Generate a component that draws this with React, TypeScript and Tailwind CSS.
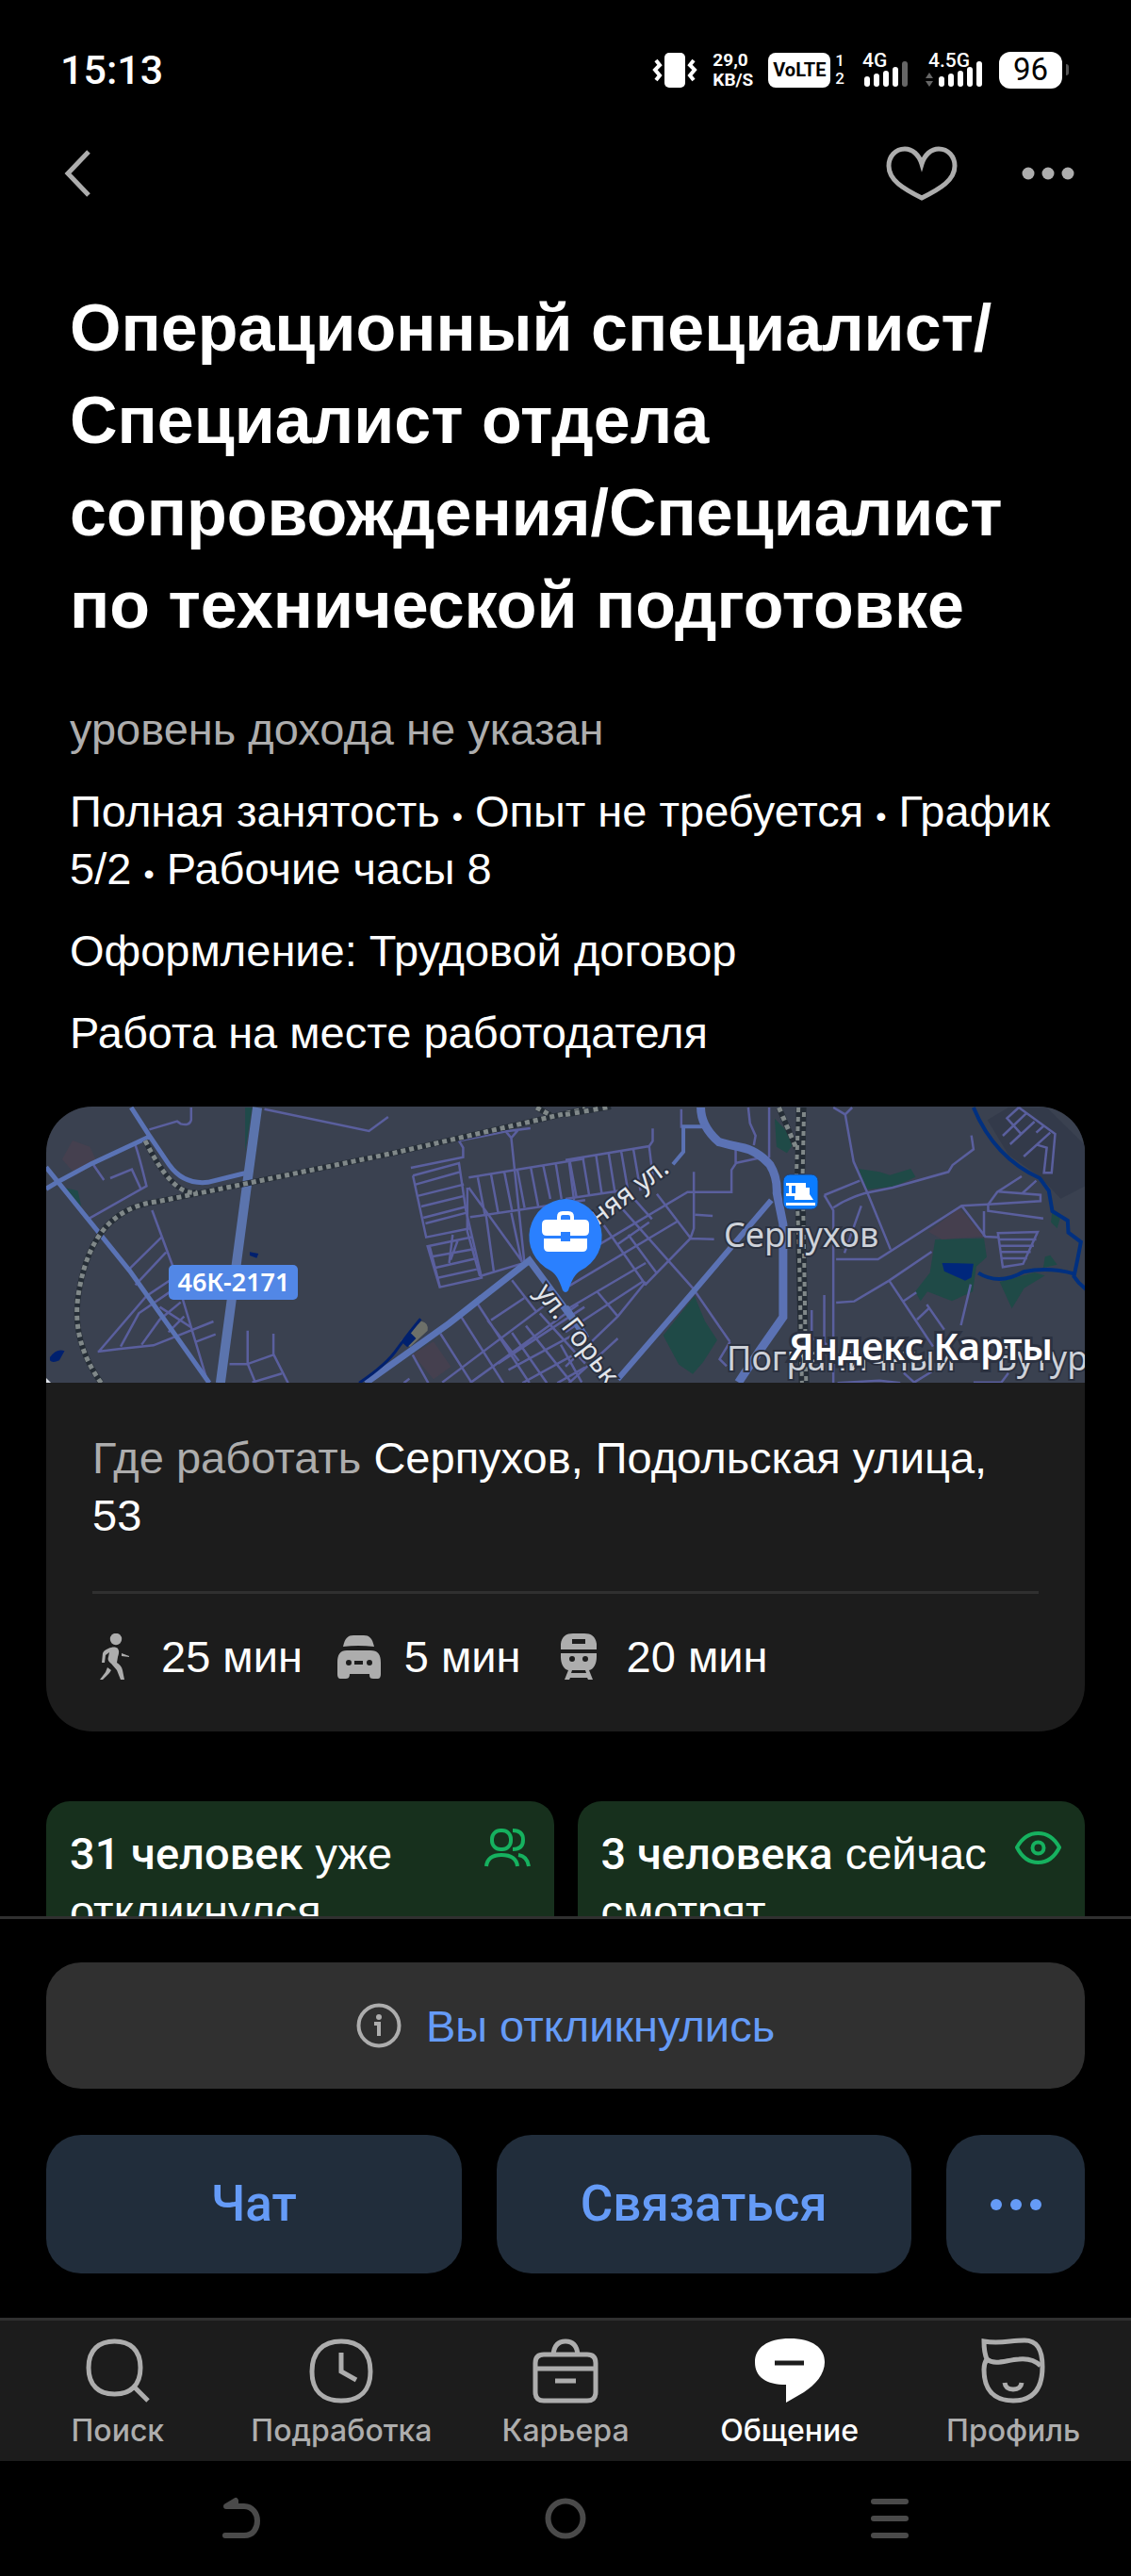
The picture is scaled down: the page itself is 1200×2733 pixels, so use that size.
import React from "react";
import clsx from "clsx";

const ICON_GRAY = "#adadad";

function SignalBars({ label, dimLast, arrows }: { label: string; dimLast?: boolean; arrows?: boolean }) {
  const start = arrows ? 16 : 5;
  const tops = [27, 24, 21, 17, 11];
  return (
    <svg width={arrows ? 64 : 52} height="52" viewBox={arrows ? "0 -6 64 52" : "0 -6 52 52"}>
      {tops.map((top, i) => (
        <rect
          key={top}
          x={start + i * 10}
          y={top}
          width="6"
          height={38 - top}
          rx="3"
          fill={dimLast && i === 4 ? "#666" : "#fff"}
        />
      ))}
      {arrows && <path d="M2 29l4-6 4 6zM2 32l4 6 4-6z" fill="#666" />}
      <text x={arrows ? 5 : 3} y="17" fontSize="21" className="fill-white font-[Roboto,sans-serif] font-medium">
        {label}
      </text>
    </svg>
  );
}

function StatusBar() {
  return (
    <div className="flex h-[148px] shrink-0 items-center justify-between pr-[66px] pl-[64px] font-[Roboto,sans-serif] text-white">
      <span className="text-[43px] leading-[48px] font-medium">15:13</span>
      <div className="flex items-center gap-4">
        <svg width="48" height="40" viewBox="0 0 48 40">
          <rect x="13" y="2" width="22" height="37" rx="5" fill="#fff" />
          <path
            d="M4 10l4 5-5 5 5 6-4 5M44 10l-4 5 5 5-5 6 4 5"
            fill="none"
            stroke="#fff"
            strokeWidth="4"
          />
        </svg>
        <div className="flex flex-col text-[19px] leading-[21px] font-bold">
          <span>29,0</span>
          <span>KB/S</span>
        </div>
        <div className="flex items-center gap-[5px]">
          <span className="flex h-[37px] w-[66px] items-center justify-center rounded-lg bg-white text-[20px] leading-[24px] font-bold text-black">
            VoLTE
          </span>
          <div className="flex flex-col text-[17px] leading-[19px] font-medium">
            <span>1</span>
            <span>2</span>
          </div>
        </div>
        <SignalBars label="4G" dimLast />
        <SignalBars label="4.5G" arrows />
        <div className="flex items-center gap-[4px]">
          <span className="flex h-[39px] w-[67px] items-center justify-center rounded-xl bg-white text-[33px] leading-[36px] text-black">
            96
          </span>
          <span className="h-3 w-[3px] rounded-r bg-[#555]" />
        </div>
      </div>
    </div>
  );
}

function TopBar() {
  return (
    <div className="flex h-[72px] shrink-0 items-center justify-between pr-[58px] pl-[65px]">
      <button type="button" aria-label="Назад">
        <svg width="34" height="52" viewBox="0 0 34 52" fill="none" stroke={ICON_GRAY} strokeWidth="5">
          <path d="M29 3L7 26l22 23" />
        </svg>
      </button>
      <div className="flex items-center gap-[65px]">
        <button type="button" aria-label="В избранное">
          <svg width="78" height="60" viewBox="0 0 78 60" fill="none" stroke={ICON_GRAY} strokeWidth="5">
            <path d="M39 20C36 10 29 4 21 4 11 4 4 12 4 22c0 15 15 24 35 34 20-10 35-19 35-34C74 12 67 4 57 4c-8 0-15 6-18 16z" />
          </svg>
        </button>
        <button type="button" aria-label="Ещё">
          <svg width="60" height="20" viewBox="0 0 60 20" fill={ICON_GRAY}>
            <circle cx="9" cy="10" r="6.5" />
            <circle cx="30" cy="10" r="6.5" />
            <circle cx="51" cy="10" r="6.5" />
          </svg>
        </button>
      </div>
    </div>
  );
}

function StreetMap() {
  return (
    <svg
      className="block h-[293px] w-full"
      viewBox="0 0 1102 293"
      preserveAspectRatio="xMidYMid slice"
      role="img"
      aria-label="Карта"
    >
      <rect width="1102" height="293" fill="#3a4150" />

      {/* west half */}
      <g transform="translate(-9 -14) scale(.37 .3333)" fill="none">
        <path d="M100 150l50 20 20 50-60 40-40-50z" fill="#45404f" />
        <path d="M1075 830l60-40 50 80-50 40z" fill="#45404f" />
        <path d="M595 45h20l-20 140zM75 300l50 60-10-50z" fill="#1f4a4a" />
        <path d="M35 840q20-30 42-20l-15 30q-20 10-27 0zM608 505l25 5-5 14-20-8z" fill="#00206e" />
        <path d="M1040 790l60-65q22 5 18 30l-50 52z" fill="#6d7069" />
        <path d="M1042 790l25-30 18 20-25 28z" fill="#00206e" />
        <g stroke="#5a5f9e" strokeWidth="2.5">
          <path vectorEffect="non-scaling-stroke" d="M440 45v40q-5 20-30 12l-10-8-80 26M650 50l300 70 55-45M160 228l30 48M208 270l62-28 25 60M280 165q10 30 32 130L148 398M328 372l60 180 100 370M355 458L262 560M368 506L280 610M400 580L312 645 175 822M395 620L290 700 238 806M410 665L350 720 298 800M420 710L375 760M172 822l60-8 100-12 172-76M440 745L350 680M455 790l55-23M602 755v105l22 60M676 765v65l42 92M550 862h50l76-30M615 920l85-28M1050 922l16-14" />
          <path vectorEffect="non-scaling-stroke" d="M1070 237l150-34v-30l-12-22 135-30 70-10M1340 118l18 24 20-26M1358 142l38 400M1076 262l132-40 20 150 45 215-120 30-35-130 130-30M1076 262l38 196 125-28M1084 290l128-40M1092 326l130-36M1100 360l125-34M1106 396l125-36M1112 414l118-34M1130 520l120-24M1138 556l118-30M1144 588l115-28M1124 488l30 130M1190 450l-10 90M1204 470l-20 60" />
          <path vectorEffect="non-scaling-stroke" d="M1236 268l332-60M1262 268l20 116M1300 258l20 120M1338 250l22 122M1376 246l20 118M1414 236l22 128M1450 232l20 104M1486 226l16 110M1524 220l14 120M1240 394l330-54M1236 300l154 236M1232 300v140l36 142M1286 390l22 178M1358 380l30 156M1268 582l120-40" />
          <path vectorEffect="non-scaling-stroke" d="M1260 668l150 254M1215 712l120 210M1155 765l90 157M1075 832l45 90M1360 595l70 100M1300 722l95-70M1160 920l300-250M1240 922l310-250M1320 860l248-180M1350 880l218-130M1390 922l180-110M1440 700l130 160M1400 740l130 180M1360 762l100 160M1290 722l90 130M1500 800l60 120M1490 922l80-50" />
        </g>
        <g stroke="#5a73b5" strokeWidth="5">
          <path vectorEffect="non-scaling-stroke" d="M24 304l30-20 100-60 166-86M268 45l50 86 60 98q40 62 110 54l110-30" />
          <path vectorEffect="non-scaling-stroke" d="M24 235l240 330 228 357" />
          <path vectorEffect="non-scaling-stroke" d="M940 922l240-190 230-200 160 240" strokeWidth="7" />
        </g>
        <path vectorEffect="non-scaling-stroke" d="M922 922q80-60 110-110 40-60 66-94" stroke="#00206e" strokeWidth="3" />
        <path vectorEffect="non-scaling-stroke" d="M630 45l-28 230-78 647" stroke="#5b74ad" strokeWidth="10" />
        <g stroke="#252d36" strokeWidth="6">
          <path vectorEffect="non-scaling-stroke" d="M182 922Q90 780 120 620q40-250 220-275l180-40 500-115 550-140" />
          <path vectorEffect="non-scaling-stroke" d="M308 150q80 180 150 165M1430 45l40 24" />
        </g>
        <g stroke="#808889" strokeWidth="5" strokeDasharray="5 4">
          <path vectorEffect="non-scaling-stroke" d="M182 922Q90 780 120 620q40-250 220-275l180-40 500-115 550-140" />
          <path vectorEffect="non-scaling-stroke" d="M308 150q80 180 150 165M1430 45l40 24" />
        </g>
      </g>

      {/* east half */}
      <g transform="translate(551 -14) scale(.37 .3333)" fill="none">
        <path d="M1270 45h110l110 120v130l-70 40-60-70-90-70-60-110z" fill="#333a4a" />
        <path d="M840 240l60 10 30 10 60-20 14 26-60 30-80 10zM1060 465l140-4 8 60-30 30-10 80-60 30-70-30-20 30-15-30 42-60zM1245 600l100-30 30 10-60 40-35 65zM280 770l90-125 30 80 35 60-40 70-30 38-40-30zM600 80l60 70-25 40-30-20zM1395 380l25 10-10 40-18-20zM1375 520l15-5 20 30-40 10z" fill="#1f4a47" />
        <path d="M1040 440l90-75 70 90-120 10z" fill="#453f4e" />
        <path d="M1080 540l90 2-6 44-18 10-60-30z" fill="#00277c" />
        <g stroke="#5a5f9e" strokeWidth="2.5">
          <path vectorEffect="non-scaling-stroke" d="M250 112v40l-10 16-240 44M240 170l12 110M195 180l20 130M160 186l20 130M124 192l18 125M88 200l16 120M50 206l18 120M12 214l20 120M0 336l180-30M332 50v60M524 45l5 50 16 40-5 30M584 45v160M488 180v44l-12 20v70H350L0 545M487 222l66-16M368 250v180l-10 32-130 148M358 462l68 2M372 386l50 4M262 320l96 140M110 420l120 190M165 370l200 250 106 170M200 340l48 60M0 620l320-212M0 690l230-150M0 870l150-160 80-110M10 922L150 780M0 760l220-160M90 630l60 80M150 480l90-70M180 450l80 120" />
          <path vectorEffect="non-scaling-stroke" d="M768 45l34 22 20-22M802 67l24 150 40 100 66 180M742 324l102-46M742 324l26 48v550M768 364q40-30 90-46l80-18 160-50 12-22 60-50-6-44M776 528h120l240-170 76-5 150-10v-20l-120-10M1136 358l68 98 40 2M848 358l-48 150M776 666l52-4 100-66 122-92M928 596l60 100 66 110M966 664l40-30M1008 720l36-38M1036 672l50 80M1162 608l-28 130M742 642v190M706 690v90l70 30M472 790l-30 56 20 22" />
          <path vectorEffect="non-scaling-stroke" d="M1300 45l104 84-10 124h-22l8-80-30-10M1300 45l-34 34 42 52M1320 65l-66 70M1345 90l-70 72M1370 105l-20 20M1390 125l-76 76M1308 264l-70 50-26 40v20l158 24M1200 375v80M1350 278l-40 40M1240 445l114-4-42 102-58 10zM1240 465h110M1245 485h98M1248 505h86M1252 525h72M970 890l30 30 50-34M780 922l120-8 60 8M1170 920h80l20-30" />
        </g>
        <g stroke="#5b72b4" strokeWidth="9">
          <path vectorEffect="non-scaling-stroke" d="M388 45q0 60 52 110 30 10 60 16 50 10 86 56 22 40 20 90l18 100v295L556 820l-60 100" />
          <path vectorEffect="non-scaling-stroke" d="M150 910l210-270 230-300" strokeWidth="6" />
          <path vectorEffect="non-scaling-stroke" d="M400 106h-62v80l-30 40" strokeWidth="4" />
          <path vectorEffect="non-scaling-stroke" d="M0 680l60 100" strokeWidth="7" />
        </g>
        <g stroke="#003080" strokeWidth="4">
          <path vectorEffect="non-scaling-stroke" d="M1170 45q60 160 190 225l26 40 10 65 44 30 2 38 36 30q-10 60-20 110l14 20 20 20" />
          <path vectorEffect="non-scaling-stroke" d="M1184 572q60 40 130-4 70-16 144 6" />
        </g>
        <g stroke="#252d36" strokeWidth="11">
          <path vectorEffect="non-scaling-stroke" d="M676 45l-4 220 4 240 8 417" />
          <path vectorEffect="non-scaling-stroke" d="M612 45l50 130M0 68l130-26" strokeWidth="6" />
        </g>
        <g stroke="#808889" strokeDasharray="5 5">
          <path vectorEffect="non-scaling-stroke" d="M668 45l-6 220 8 240 8 417" strokeWidth="4" />
          <path vectorEffect="non-scaling-stroke" d="M684 45l-4 220 4 240 6 417" strokeWidth="4" strokeDashoffset="5" />
          <path vectorEffect="non-scaling-stroke" d="M612 45l50 130M0 68l130-26" strokeWidth="5" />
        </g>
      </g>

      <rect x="130" y="168" width="137" height="37" rx="5" fill="#5287e6" />
      <text x="199" y="196" textAnchor="middle" fontSize="27" className="fill-white font-[Noto_Sans,sans-serif] font-semibold">
        46К-2171
      </text>

      <g className="font-[Noto_Sans,sans-serif]" fill="#e2e5ea" stroke="#2b3140" strokeWidth="4" paintOrder="stroke">
        <text transform="translate(585 127) rotate(-37)" fontSize="29">
          няя ул.
        </text>
        <text transform="translate(518 197) rotate(53)" fontSize="29">
          ул. Горьк
        </text>
        <text x="719" y="149" fontSize="36" fill="#ced2d9">
          Серпухов
        </text>
        <text x="722" y="280" fontSize="36" fill="#ced2d9">
          Пограничный
        </text>
        <text x="1008" y="280" fontSize="36" fill="#ced2d9">
          Бутур
        </text>
        <text x="788" y="269" fontSize="40" fill="#fff" strokeWidth="6" className="font-semibold">
          Яндекс Карты
        </text>
      </g>
      <path d="M0 288l5 5H0z" fill="#dfe3ea" />

      {/* railway station */}
      <rect x="782" y="72" width="37" height="37" rx="7" fill="#0a7cff" stroke="#24406e" strokeWidth="1" />
      <path d="M785 81h21v5h4v7l4 6h-20v-4h-9v-3h3v-8h-3zm6 3v8h4v-8zM785 102h31v3h-31z" fill="#fff" />

      {/* workplace pin */}
      <path
        d="M551 98a40 40 0 0 1 16 76c-6 4-9 9-13 21q-3 4-6 0c-4-12-7-17-13-21a40 40 0 0 1 16-76z"
        fill="#2a80ff"
      />
      <path d="M544 120v-3q0-4 4-4h6q4 0 4 4v3" fill="none" stroke="#fff" strokeWidth="4" />
      <path
        d="M531 120h40q5 0 5 5v7q0 5-5 5h-15v-4h-10v4h-15q-5 0-5-5v-7q0-5 5-5zM528 140h18v3h10v-3h18v9q0 5-5 5h-36q-5 0-5-5z"
        fill="#fff"
      />
    </svg>
  );
}

const WalkIcon = () => (
  <svg width="31" height="50" viewBox="0 0 31 50" fill={ICON_GRAY}>
    <circle cx="17" cy="6" r="6.2" />
    <path d="M9 16c4-2 8-2 10 0 2 3 1 6 0 9l-1 6c3 2 5 4 6 8l2 10h-4l-4-10-6-7c-3-2-4-4-3-7l1-5-4 3-1 8H2l1-10c1-3 4-4 6-5zM8 36l4 3-2 3-7 7H0l6-8zM23 21l8 3v1l-8-1z" />
  </svg>
);

const CarIcon = () => (
  <svg width="48" height="48" viewBox="0 0 48 48" fill={ICON_GRAY} fillRule="evenodd">
    <path d="M7 13C9 4 12 1 18 1h11c6 0 9 3 11 12Q23 11 7 13z" />
    <path d="M11 17h25c8 0 11 4 11 13v12c0 3-1 5-3 5h-5c-3 0-4-1-4-5H14c0 4-2 5-4 5H4c-2 0-3-2-3-5V30c0-9 3-13 10-13zm2 10a3 3 0 1 0 0 6 3 3 0 1 0 0-6zm22 0a3 3 0 1 0 0 6 3 3 0 1 0 0-6zm-16 1v4h9v-4z" />
  </svg>
);

const TrainIcon = () => (
  <svg width="38" height="50" viewBox="0 0 38 50" fill={ICON_GRAY} fillRule="evenodd">
    <path d="M0 17V11C1 3 6 0 13 0h12c7 0 12 3 13 11v6zM12 6v5h14V6z" />
    <path d="M0 21h38v4c0 7-3 13-8 14l4 10h-5l-1-2H10l-1 2H4l4-10C3 38 0 32 0 25zm12 3a3 3 0 1 0 0 6 3 3 0 1 0 0-6zm14 0a3 3 0 1 0 0 6 3 3 0 1 0 0-6zM12 39l-1 3h16l-1-3z" />
  </svg>
);

function WorkplaceCard() {
  return (
    <section className="mx-[49px] mt-[48px] overflow-hidden rounded-[49px] bg-[#1c1c1c]">
      <StreetMap />
      <div className="px-[49px] pt-[49px] pb-[49px]">
        <p>
          <span className="text-[#adadad]">Где работать</span> Серпухов, Подольская улица, 53
        </p>
        <ul className="mt-[50px] flex items-center border-t-[3px] border-[#303030] pt-[36px]">
          <li className="flex items-center gap-[34px] pl-2">
            <WalkIcon /> 25 мин
          </li>
          <li className="ml-[36px] flex items-center gap-[24px]">
            <CarIcon /> 5 мин
          </li>
          <li className="ml-[42px] flex items-center gap-[32px]">
            <TrainIcon /> 20 мин
          </li>
        </ul>
      </div>
    </section>
  );
}

type StatCardProps = { count: string; first: string; second: string; icon: React.ReactNode };

function StatCard({ count, first, second, icon }: StatCardProps) {
  return (
    <div className="flex flex-1 justify-between rounded-[25px] bg-[#17301d] p-[25px]">
      <p>
        <span className="font-[Roboto,sans-serif] font-medium">{count}</span> <span>{first}</span>
        <br />
        <span>{second}</span>
      </p>
      {icon}
    </div>
  );
}

const PeopleIcon = () => (
  <svg className="shrink-0" width="49" height="49" viewBox="0 0 49 49" fill="none" stroke="#16b15f" strokeWidth="4">
    <rect x="8" y="6" width="20" height="20" rx="9" />
    <path d="M30 6c8 0 11 4 11 10s-3 10-11 10M2 44C3 35 9 32 18 32s16 3 17 12M36 32c7 1 10 5 11 12" />
  </svg>
);

const EyeIcon = () => (
  <svg className="shrink-0" width="49" height="49" viewBox="0 0 49 49" fill="none" stroke="#16b15f" strokeWidth="4">
    <path d="M2 24C8 13 16 9 24.500 9S41 13 47 24C41 36 33 40 24.500 40S8 36 2 24z" />
    <circle cx="24.500" cy="24.500" r="6" />
  </svg>
);

function ActionPanel() {
  const button =
    "h-[147px] rounded-[37px] bg-[#212d3b] font-[Roboto,sans-serif] text-[53px] leading-[61px] font-medium text-[#659bf7]";
  return (
    <section className="flex shrink-0 flex-col gap-[49px] border-t-[3px] border-[#303030] bg-black px-[49px] pt-[46px] pb-[47px]">
      <button
        type="button"
        className="flex h-[134px] items-center justify-center gap-[26px] rounded-[37px] bg-[#303030] text-[#659bf7]"
      >
        <svg width="48" height="48" viewBox="0 0 48 48" fill="none" stroke={ICON_GRAY} strokeWidth="4">
          <circle cx="24" cy="24" r="21.500" />
          <path d="M19 22h5v13" />
          <circle cx="24" cy="15" r="3" fill={ICON_GRAY} stroke="none" />
        </svg>
        Вы откликнулись
      </button>
      <div className="flex gap-[37px]">
        <button type="button" className={clsx(button, "flex-1")}>
          Чат
        </button>
        <button type="button" className={clsx(button, "flex-1")}>
          Связаться
        </button>
        <button type="button" aria-label="Ещё" className={clsx(button, "flex w-[147px] items-center justify-center")}>
          <svg width="60" height="20" viewBox="0 0 60 20" fill="#659bf7">
            <circle cx="9" cy="10" r="6" />
            <circle cx="30" cy="10" r="6" />
            <circle cx="51" cy="10" r="6" />
          </svg>
        </button>
      </div>
    </section>
  );
}

const tabs = [
  {
    label: "Поиск",
    icon: (
      <>
        <path d="M33.500 4C50 4 61 13 61 32S50 60 33.500 60 6 51 6 32 17 4 33.500 4z" />
        <path d="M54 52l15 15" />
      </>
    ),
  },
  {
    label: "Подработка",
    icon: (
      <>
        <path d="M37 4c20 0 31 12 31 32S57 67 37 67 6 56 6 36 17 4 37 4z" />
        <path d="M37 16v20l16 9" />
      </>
    ),
  },
  {
    label: "Карьера",
    icon: (
      <>
        <path d="M14 18h46q9 0 9 9v31q0 9-9 9H14q-9 0-9-9V27q0-9 9-9zM5 33h64M26 46h22M24 18C25 8 30 4 37 4s12 4 13 14" />
      </>
    ),
  },
  {
    label: "Общение",
    active: true,
    icon: (
      <>
        <path d="M37 1c24 0 37 10 37 25 0 13-10 24-22 32L33 69V50C12 50 0 42 0 26 0 11 13 1 37 1z" fill="#fff" stroke="none" />
        <path d="M21 27h31" stroke="#1c1c1c" />
      </>
    ),
  },
  {
    label: "Профиль",
    icon: (
      <>
        <path d="M6 4c17 3 28-1 43-1 13 0 19 9 19 28 0 24-10 36-31 36S6 55 6 34c0-5 1-8 3-11C7 18 6 12 6 4z" />
        <path d="M9 23c9 7 20 1 34 0 10-1 18 2 23 7M28 48q1 7 9 7t9-7" />
      </>
    ),
  },
];

function TabBar() {
  return (
    <nav className="flex shrink-0 border-t-[3px] border-[#303030] bg-[#1c1c1c] px-[6px] pt-[18px] pb-[12px]">
      {tabs.map((tab) => (
        <a
          key={tab.label}
          href="#"
          className={clsx(
            "flex flex-1 basis-0 flex-col items-center gap-[8px] font-[Inter,sans-serif] text-[32px] leading-[40px] font-medium",
            tab.active ? "text-white" : "text-[#adadad]"
          )}
        >
          <svg width="74" height="71" viewBox="0 0 74 71" fill="none" stroke={ICON_GRAY} strokeWidth="5">
            {tab.icon}
          </svg>
          {tab.label}
        </a>
      ))}
    </nav>
  );
}

function SystemNav() {
  return (
    <div className="flex h-[122px] shrink-0 items-center justify-center gap-[300px]">
      <button type="button" aria-label="Системная кнопка назад">
        <svg width="44" height="46" viewBox="0 0 44 46" fill="none" stroke="#4a4a4a" strokeWidth="6" strokeLinecap="round">
          <path d="M5 41h20c10 0 14-8 14-15.500S34 10 25 10H6l10-6v5" strokeLinejoin="round" />
        </svg>
      </button>
      <button type="button" aria-label="Домой">
        <svg width="44" height="46" viewBox="0 0 44 46" fill="none" stroke="#4a4a4a" strokeWidth="6">
          <circle cx="22" cy="23" r="18.500" />
        </svg>
      </button>
      <button type="button" aria-label="Недавние">
        <svg width="44" height="46" viewBox="0 0 44 46" fill="none" stroke="#4a4a4a" strokeWidth="6" strokeLinecap="round">
          <path d="M5 5h34M5 23h34M5 41h34" />
        </svg>
      </button>
    </div>
  );
}

const Dot = () => <span className="text-[32px] leading-none">•</span>;

export default function App() {
  return (
    <div className="flex h-screen flex-col overflow-hidden bg-black font-[Liberation_Sans,sans-serif] text-[47px] leading-[61px] text-white">
      <StatusBar />
      <TopBar />
      <main className="min-h-0 flex-1 overflow-hidden pt-[79px]">
        <h1 className="px-[74px] text-[70px] leading-[98px] font-bold">
          Операционный специалист/ Специалист отдела сопровождения/Специалист по технической подготовке
        </h1>
        <div className="mt-[52px] flex flex-col gap-[26px] px-[74px]">
          <p className="text-[#adadad]">уровень дохода не указан</p>
          <p>
            Полная занятость <Dot /> Опыт не требуется <Dot /> График 5/2 <Dot /> Рабочие часы 8
          </p>
          <p>Оформление: Трудовой договор</p>
          <p>Работа на месте работодателя</p>
        </div>
        <WorkplaceCard />
        <div className="mt-[74px] flex gap-[25px] px-[49px]">
          <StatCard count="31 человек" first="уже" second="откликнулся" icon={<PeopleIcon />} />
          <StatCard count="3 человека" first="сейчас" second="смотрят" icon={<EyeIcon />} />
        </div>
      </main>
      <ActionPanel />
      <TabBar />
      <SystemNav />
    </div>
  );
}
